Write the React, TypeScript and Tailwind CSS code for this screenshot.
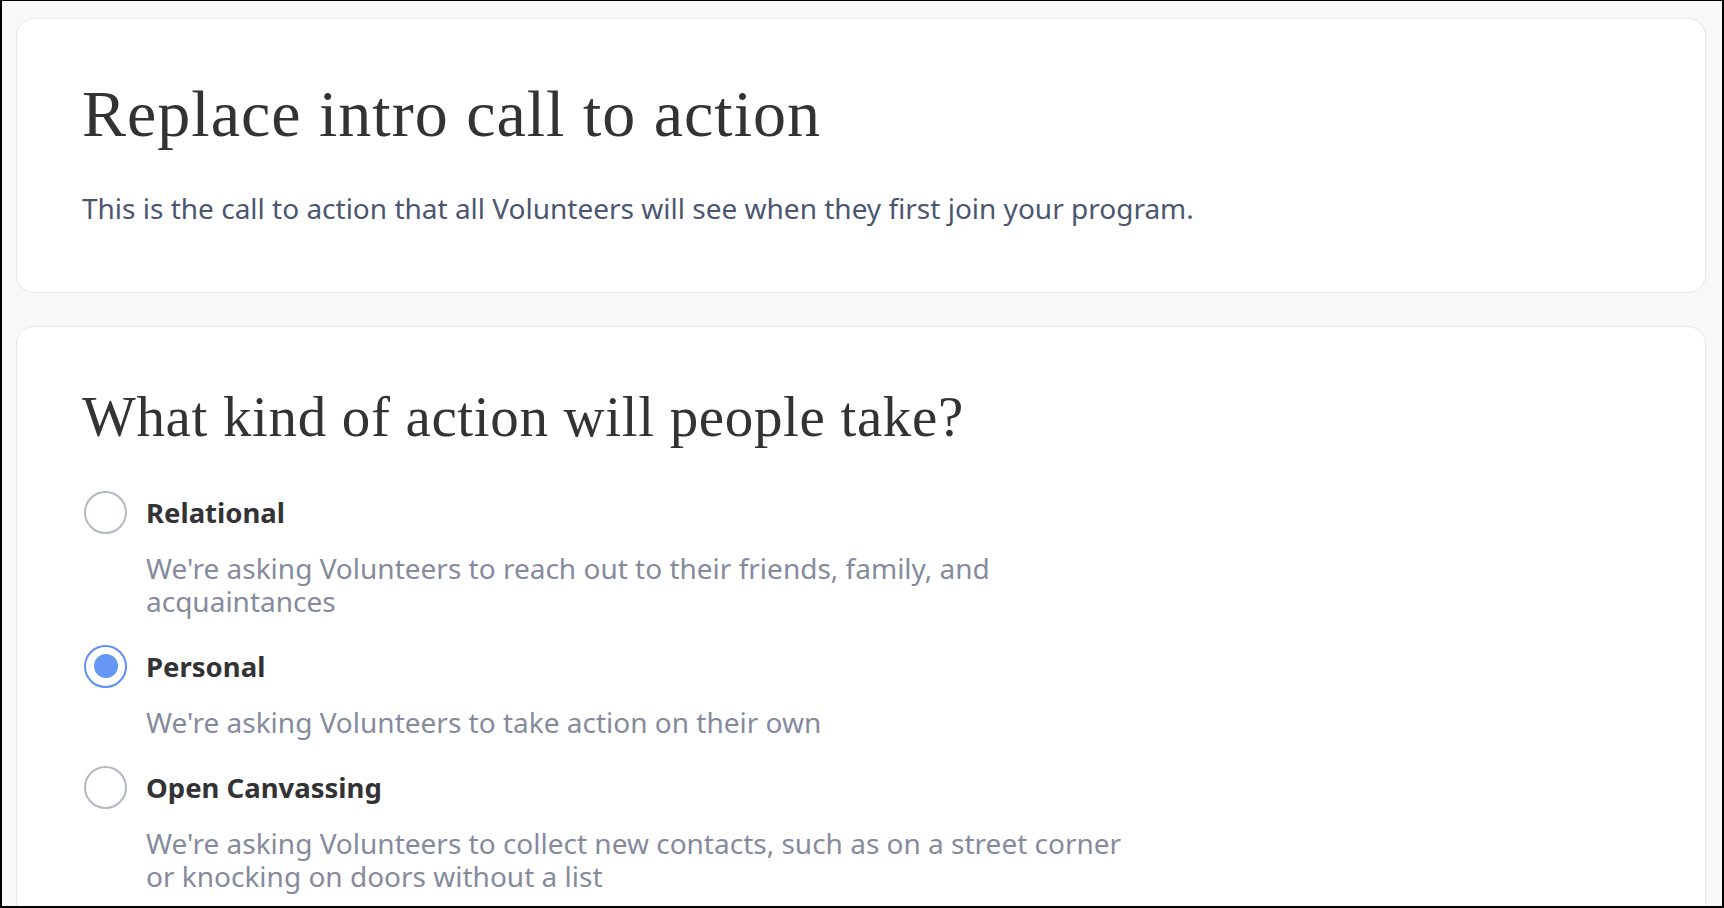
import React, { useState } from "react";

interface ActionOption {
  id: string;
  label: string;
  description: string;
}

const options: ActionOption[] = [
  {
    id: "relational",
    label: "Relational",
    description:
      "We're asking Volunteers to reach out to their friends, family, and acquaintances",
  },
  {
    id: "personal",
    label: "Personal",
    description: "We're asking Volunteers to take action on their own",
  },
  {
    id: "open",
    label: "Open Canvassing",
    description:
      "We're asking Volunteers to collect new contacts, such as on a street corner or knocking on doors without a list",
  },
];

const serif = "font-['Liberation_Serif',serif]";
const sans = "font-['Noto_Sans',sans-serif]";

const App: React.FC = () => {
  const [selected, setSelected] = useState("personal");

  return (
    <div className="h-screen overflow-hidden border-black border-l-2 border-r-2 border-t border-b-2 bg-[#f8f8f8] pl-[14px] pr-4 pt-[17px] flex flex-col gap-[33px]">
      <div className="bg-white border border-[#e6e6ec] rounded-[18px] px-[65px] pt-[55px] pb-[66px]">
        <h1 className={`${serif} text-[66px] leading-[1.2] tracking-[1px] text-[#333333]`}>
          Replace intro call to action
        </h1>
        <p className={`${sans} mt-[39px] text-[28px] leading-[1.2] text-[#4b5671]`}>
          This is the call to action that all Volunteers will see when they first join your program.
        </p>
      </div>

      <div className="bg-white border border-[#e6e6ec] rounded-[18px] px-[65px] pt-[56px] pb-16 shrink-0">
        <h2 className={`${serif} text-[57px] leading-[1.2] tracking-[0.65px] text-[#333333]`}>
          What kind of action will people take?
        </h2>
        <div className="mt-[39px] flex flex-col gap-[26px]">
          {options.map((opt) => {
            const active = opt.id === selected;
            return (
              <div key={opt.id}>
                <button
                  type="button"
                  onClick={() => setSelected(opt.id)}
                  className="flex items-center gap-[19px] h-11 ml-[2px] text-left"
                >
                  <span
                    className={`w-[43px] h-[43px] rounded-full border-2 flex items-center justify-center shrink-0 ${
                      active ? "border-[#5f8ff2]" : "border-[#b4b8c4]"
                    }`}
                  >
                    {active && (
                      <span className="w-[24px] h-[24px] rounded-full bg-[#6597f4]" />
                    )}
                  </span>
                  <span className={`${sans} text-[27.5px] leading-[33px] font-bold text-[#333336]`}>
                    {opt.label}
                  </span>
                </button>
                <p
                  className={`${sans} mt-[18px] ml-[64px] max-w-[990px] text-[28px] leading-[33px] text-[#858b9d]`}
                >
                  {opt.description}
                </p>
              </div>
            );
          })}
        </div>
      </div>
    </div>
  );
};

export default App;
